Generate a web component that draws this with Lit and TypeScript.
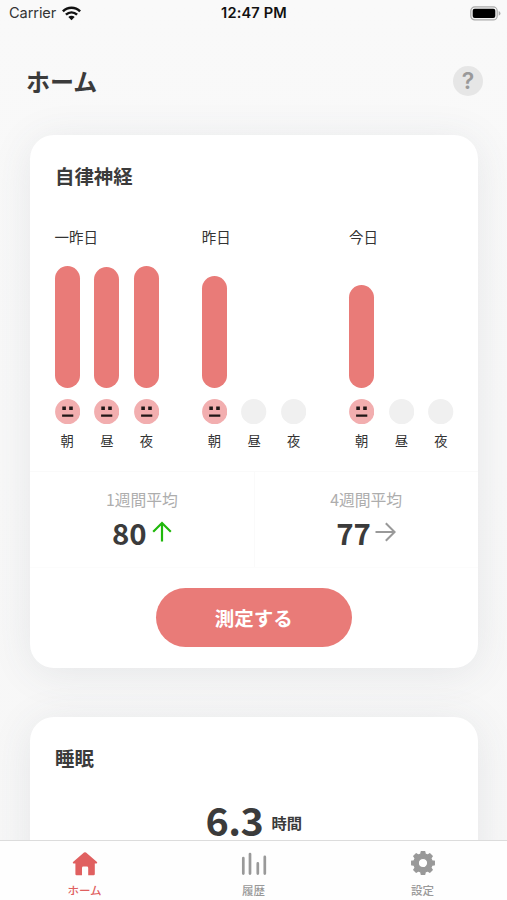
import { LitElement, html, css, svg } from "lit";
import { customElement, property } from "lit/decorators.js";
import { styleMap } from "lit/directives/style-map.js";

interface Slot {
  label: string;
  height: number;
}

interface Day {
  name: string;
  slots: Slot[];
}

const days: Day[] = [
  { name: "一昨日", slots: [{ label: "朝", height: 122 }, { label: "昼", height: 121.5 }, { label: "夜", height: 122 }] },
  { name: "昨日", slots: [{ label: "朝", height: 112 }, { label: "昼", height: 0 }, { label: "夜", height: 0 }] },
  { name: "今日", slots: [{ label: "朝", height: 103 }, { label: "昼", height: 0 }, { label: "夜", height: 0 }] },
];

@customElement("day-chart")
export class DayChart extends LitElement {
  @property({ attribute: false }) day!: Day;

  static styles = css`
    :host { display: block; width: 104.6px; }
    .name { font-size: 14.5px; line-height: 22px; height: 22px; color: #333; }
    .slots { display: flex; justify-content: space-between; margin-top: 17px; }
    .slot { display: flex; flex-direction: column; align-items: center; width: 25.4px; }
    .track { display: flex; align-items: flex-end; height: 123px; width: 100%; }
    .bar { width: 100%; border-radius: 13px; background: #e97b78; }
    .face { display: block; width: 25.4px; height: 25.4px; margin-top: 10.6px; }
    .label { font-size: 13.3px; line-height: 20px; margin-top: 7.4px; color: #333; }
  `;

  render() {
    return html`
      <div class="name">${this.day.name}</div>
      <div class="slots">
        ${this.day.slots.map((slot) => html`
          <div class="slot">
            <div class="track"><div class="bar" style=${styleMap({ height: `${slot.height}px` })}></div></div>
            <svg class="face" viewBox="0 0 25.4 25.4">
              <circle cx="12.7" cy="12.7" r="12.6" fill=${slot.height ? "#f2aeaf" : "#f0f0f0"}></circle>
              ${slot.height ? svg`<path d="M7.3 7.6h3.6v3.4h-3.6zM14.2 7.6h3.6v3.4h-3.6zM7.1 15.5h11.2v2.2h-11.2z" fill="#211717"/>` : ""}
            </svg>
            <div class="label">${slot.label}</div>
          </div>`)}
      </div>`;
  }
}

const gearPath = (() => {
  const points: string[] = [];
  for (let i = 0; i < 8; i++) {
    for (const [offset, radius] of [[-14, 9.2], [-9, 11.5], [9, 11.5], [14, 9.2]]) {
      const a = ((i * 45 + offset) * Math.PI) / 180;
      points.push(`${(13 + radius * Math.sin(a)).toFixed(2)} ${(13 - radius * Math.cos(a)).toFixed(2)}`);
    }
  }
  return `M${points.join("L")}ZM13 8.3a4.7 4.7 0 1 0 0 9.4a4.7 4.7 0 1 0 0-9.4Z`;
})();

@customElement("app-root")
export class AppRoot extends LitElement {
  static styles = css`
    :host {
      display: flex; flex-direction: column; height: 900px; overflow: hidden;
      font-family: "Noto Sans CJK JP", sans-serif; color: #3b3b3b;
      background: linear-gradient(#f9f9f9, #f7f7f7);
    }
    .status {
      display: grid; grid-template-columns: 1fr auto 1fr; align-items: center;
      height: 27px; flex: none; padding: 0 6px 0 9px; color: #111;
      font: 14.6px/27px Inter, sans-serif;
    }
    .carrier { display: flex; align-items: center; gap: 6px; letter-spacing: -0.1px; color: #333; }
    .time { font-weight: 600; letter-spacing: 0.15px; margin-right: 2px; }
    .battery { justify-self: end; display: block; }
    .header {
      display: flex; justify-content: space-between; align-items: center;
      height: 108px; flex: none; box-sizing: border-box; padding: 0 24px 0 26px;
    }
    .title { font-size: 24px; font-weight: 700; line-height: 36px; margin: 0; }
    .help {
      width: 30px; height: 30px; border-radius: 50%; background: #e6e6e6; color: #999;
      display: flex; align-items: center; justify-content: center;
      font: 600 23px/30px Inter, sans-serif;
    }
    .scroll { flex: 1; min-height: 0; padding: 0 29.5px 0 30px; display: flex; flex-direction: column; gap: 48.5px; }
    .card { flex: none; box-sizing: border-box; border-radius: 24px; background: #fff; box-shadow: 0 5px 40px rgba(70, 80, 100, 0.1); }
    .main { height: 533px; padding-top: 26px; }
    .sleep { height: 300px; padding-top: 26px; }
    .heading { margin: 0 25px; font-size: 19.4px; line-height: 30px; height: 30px; font-weight: 700; }
    .days { display: flex; justify-content: space-between; padding: 35px 23.9px 0 24.5px; }
    .averages { display: grid; grid-template-columns: 1fr 1fr; height: 95px; margin-top: 20px; border-top: 1px solid #fafafa; border-bottom: 1px solid #fcfcfc; }
    .average { display: flex; flex-direction: column; align-items: center; padding-top: 16px; }
    .average + .average { border-left: 1px solid #fafafa; }
    .caption { font-size: 15.8px; line-height: 24px; color: #adadad; font-weight: 400; }
    .score { display: flex; align-items: center; gap: 5px; height: 41px; font-size: 29.4px; line-height: 41px; font-weight: 700; }
    .arrow { display: block; margin-bottom: 2px; }
    .flat { margin-left: -1px; margin-bottom: 1px; }
    .action {
      display: block; width: 196px; height: 59px; margin: 19.4px auto 0; border: 0; border-radius: 30px;
      background: #e97b78; color: #fff; font: 700 19.5px/59px "Noto Sans CJK JP", sans-serif; padding: 0;
    }
    .hours { display: flex; justify-content: center; align-items: center; gap: 8px; height: 52px; margin-top: 20px; font-weight: 700; }
    .value { font-size: 39.5px; line-height: 52px; letter-spacing: -0.5px; }
    .unit { font-size: 15.3px; line-height: 24px; margin-top: 6px; }
    .tabs { display: grid; grid-template-columns: repeat(3, 1fr); height: 60px; flex: none; box-sizing: border-box; border-top: 1px solid #dcdcdc; background: #fefefe; z-index: 1; }
    .tab { display: flex; flex-direction: column; align-items: center; padding-top: 9px; color: #999; font-size: 11.5px; line-height: 18px; font-weight: 500; }
    .tab svg { display: block; margin-bottom: 5px; }
    .active { color: #e06060; }
  `;

  render() {
    return html`
      <div class="status">
        <div class="carrier">Carrier
          <svg width="19" height="15" viewBox="0 0 19 15" fill="none" stroke="#111" stroke-width="2.5">
            <path d="M.9 5.4C5.8.5 13.2.5 18.1 5.4M3.9 8.7c3.3-3 7.9-3 11.2 0"></path>
            <path d="M9.5 14.3 6.3 11.1c1.9-1.7 4.5-1.7 6.4 0Z" fill="#111" stroke="none"></path>
          </svg>
        </div>
        <div class="time">12:47 PM</div>
        <svg class="battery" width="31" height="15" viewBox="0 0 31 15">
          <rect x="0.8" y="0.9" width="26.4" height="13" rx="4" fill="#f4f4f4" stroke="#aaa" stroke-width="1.2"></rect>
          <rect x="2.7" y="2.7" width="22.6" height="9.4" rx="2" fill="#000"></rect>
          <path d="M28.7 5.1q1.8.8 1.8 2.3t-1.8 2.3z" fill="#aaa"></path>
        </svg>
      </div>
      <div class="header">
        <h1 class="title">ホーム</h1>
        <div class="help">?</div>
      </div>
      <div class="scroll">
        <section class="card main">
          <h2 class="heading">自律神経</h2>
          <div class="days">${days.map((day) => html`<day-chart .day=${day}></day-chart>`)}</div>
          <div class="averages">
            <div class="average">
              <div class="caption">1週間平均</div>
              <div class="score">80
                <svg class="arrow" width="20" height="22" viewBox="0 0 20 22" fill="none" stroke="#20b80c" stroke-width="2.2">
                  <path d="M10 20.5V2.2M1.2 10.8 10 2l8.8 8.8"></path>
                </svg>
              </div>
            </div>
            <div class="average">
              <div class="caption">4週間平均</div>
              <div class="score">77
                <svg class="arrow flat" width="21" height="20" viewBox="0 0 21 20" fill="none" stroke="#999" stroke-width="2">
                  <path d="M.5 10h18.8M10.8 1.2l8.8 8.8-8.8 8.8"></path>
                </svg>
              </div>
            </div>
          </div>
          <button class="action">測定する</button>
        </section>
        <section class="card sleep">
          <h2 class="heading">睡眠</h2>
          <div class="hours"><span class="value">6.3</span><span class="unit">時間</span></div>
        </section>
      </div>
      <nav class="tabs">
        <div class="tab active">
          <svg width="26" height="26" viewBox="0 0 26 26">
            <path d="M12 2.6q1-.9 2 0L25 12.1q.7 1.1-.5 1.3H22.8V24q0 1.3-1.2 1.3H16.2V18q0-1.4-1.3-1.4h-3.6q-1.3 0-1.3 1.4v7.3H4.6q-1.2 0-1.2-1.3V13.4H1.5Q.3 13.2 1 12.1Z" fill="currentColor"></path>
          </svg>
          <span>ホーム</span>
        </div>
        <div class="tab">
          <svg width="26" height="26" viewBox="0 0 26 26" fill="none" stroke="currentColor" stroke-width="2.7" stroke-linecap="round">
            <path d="M2.3 8.2V23.6M9 4V23.6M16.8 13.4V23.6M23.8 6.9V23.6"></path>
          </svg>
          <span>履歴</span>
        </div>
        <div class="tab">
          <svg width="26" height="26" viewBox="0 0 26 26" fill="currentColor" stroke="currentColor" stroke-width="1.2" stroke-linejoin="round">
            <path d=${gearPath} fill-rule="evenodd"></path>
          </svg>
          <span>設定</span>
        </div>
      </nav>`;
  }
}
